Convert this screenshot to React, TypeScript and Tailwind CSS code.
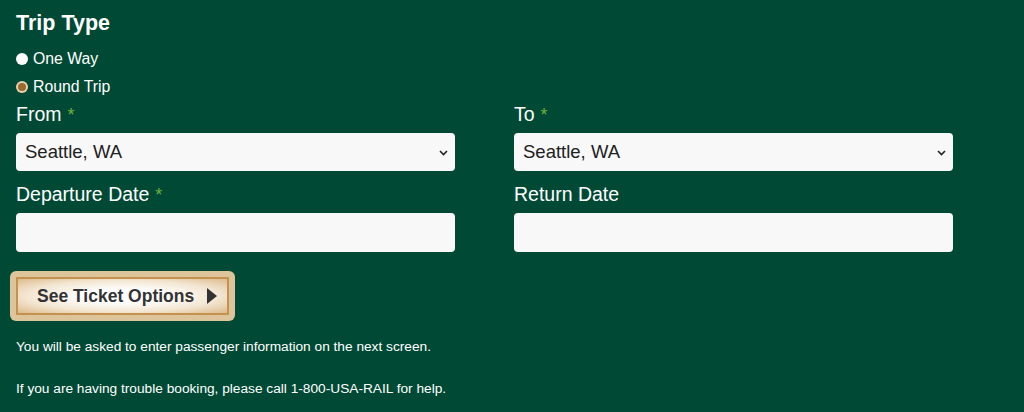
import { useState } from "react";

const font = { fontFamily: '"Liberation Sans", Arial, sans-serif' };

const Radio = ({ checked, label, onClick }: { checked: boolean; label: string; onClick: () => void }) => (
  <label className="flex items-center h-[28px] cursor-pointer" onClick={onClick}>
    {checked ? (
      <span className="w-[12px] h-[12px] rounded-full bg-[#e8d2ae] flex items-center justify-center mr-[5px]">
        <span className="w-[8px] h-[8px] rounded-full bg-[#9c6a2e]"></span>
      </span>
    ) : (
      <span className="w-[12px] h-[12px] rounded-full bg-white mr-[5px]"></span>
    )}
    <span className="text-[15.8px] text-white">{label}</span>
  </label>
);

const Label = ({ text, required }: { text: string; required?: boolean }) => (
  <div className="h-[24px] flex items-center text-[19.5px] text-white">
    {text}
    {required && <span className="text-[#6fae3c] ml-[6px] text-[18px]">*</span>}
  </div>
);

const Select = () => (
  <div className="relative mt-[6px]">
    <select
      defaultValue="Seattle, WA"
      className="appearance-none w-full h-[38px] rounded-[4px] bg-[#f8f8f8] text-[#212121] text-[18.5px] pl-[9px] pr-[24px] outline-none"
      style={font}
    >
      <option>Seattle, WA</option>
      <option>Portland, OR</option>
      <option>Vancouver, BC</option>
    </select>
    {/* small chevron like the native one */}
    <svg width="9" height="6" viewBox="0 0 9 6" className="absolute right-[7px] top-[17px] pointer-events-none">
      <path d="M1 1 L4.5 4.5 L8 1" fill="none" stroke="#222222" strokeWidth="1.6" />
    </svg>
  </div>
);

export default function App() {
  const [trip, setTrip] = useState("round");

  return (
    <div className="w-[1024px] h-[412px] bg-[#004a35] px-4 pt-[9px] overflow-hidden" style={font}>
      <h2 className="text-[21.5px] leading-[28px] font-bold text-white mb-[8px]">Trip Type</h2>
      <Radio checked={trip === "one"} label="One Way" onClick={() => setTrip("one")} />
      <Radio checked={trip === "round"} label="Round Trip" onClick={() => setTrip("round")} />

      <div className="grid grid-cols-2 gap-x-[59px] w-[937px] mt-[2px]">
        <div>
          <Label text="From" required />
          <Select />
        </div>
        <div>
          <Label text="To" required />
          <Select />
        </div>
        <div className="mt-[12px]">
          <Label text="Departure Date" required />
          <input className="w-full h-[39px] mt-[6px] rounded-[4px] bg-[#f8f8f8] outline-none px-2" />
        </div>
        <div className="mt-[12px]">
          <Label text="Return Date" />
          <input className="w-full h-[39px] mt-[6px] rounded-[4px] bg-[#f8f8f8] outline-none px-2" />
        </div>
      </div>

      <div className="mt-[19px] -ml-[6px] w-[225px] h-[50px] p-[6px] rounded-[6px] bg-[#ddc49b]">
        <button className="w-full h-full flex items-center border-2 border-[#c4914f] bg-[radial-gradient(ellipse_at_center,#ffffff_25%,#f3e6d2_65%,#dcbb8d_100%)] pl-[19px] cursor-pointer">
          <span className="text-[17.5px] font-bold text-[#333333]">See Ticket Options</span>
          <svg width="10" height="16" viewBox="0 0 10 16" className="ml-[13px]">
            <path d="M0 0 L10 8 L0 16 Z" fill="#333333" />
          </svg>
        </button>
      </div>

      <p className="mt-[16px] text-[13.7px] leading-[20px] text-white">
        You will be asked to enter passenger information on the next screen.
      </p>
      <p className="mt-[22px] text-[13.7px] leading-[20px] text-white">
        If you are having trouble booking, please call 1-800-USA-RAIL for help.
      </p>
    </div>
  );
}
